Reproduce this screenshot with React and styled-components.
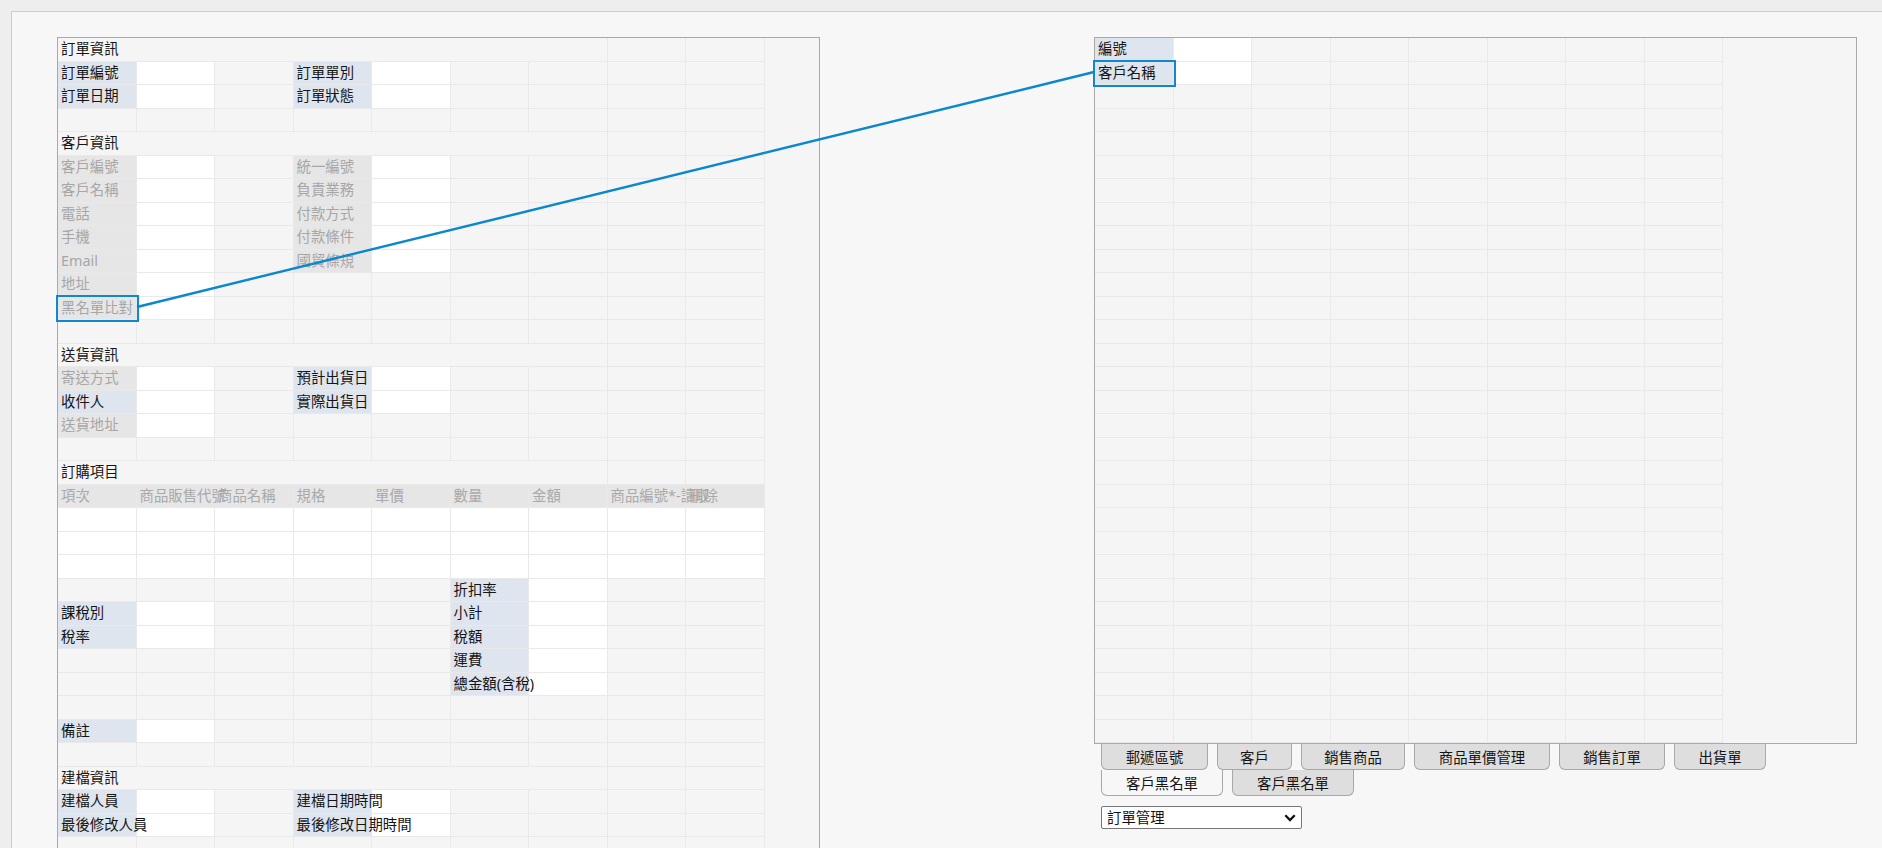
import React from 'react';
import styled, { createGlobalStyle } from 'styled-components';

const GlobalStyle = createGlobalStyle`
  html, body {
    margin: 0;
    padding: 0;
    background: #eeeeee;
    overflow: hidden;
  }
  body {
    font-family: "Noto Sans", "Noto Sans CJK TC", sans-serif;
    font-size: 14.4px;
    color: #151515;
  }
`;

// cell kinds: L label, D disabled label, I input, H grid head, S section title, E / null empty
const L = (t, linked) => ({ k: 'L', t, linked });
const D = (t, linked) => ({ k: 'D', t, linked });
const H = (t) => ({ k: 'H', t });
const I = { k: 'I' };
const E = null;

const section = (t) => ({ section: t });
const blank = [];

const orderRows = [
  section('訂單資訊'),
  [L('訂單編號'), I, E, L('訂單單別'), I],
  [L('訂單日期'), I, E, L('訂單狀態'), I],
  blank,
  section('客戶資訊'),
  [D('客戶編號'), I, E, D('統一編號'), I],
  [D('客戶名稱'), I, E, D('負責業務'), I],
  [D('電話'), I, E, D('付款方式'), I],
  [D('手機'), I, E, D('付款條件'), I],
  [D('Email'), I, E, D('國貿條規'), I],
  [D('地址'), I],
  [D('黑名單比對', true), I],
  blank,
  section('送貨資訊'),
  [D('寄送方式'), I, E, L('預計出貨日'), I],
  [L('收件人'), I, E, L('實際出貨日'), I],
  [D('送貨地址'), I],
  blank,
  section('訂購項目'),
  [H('項次'), H('商品販售代號'), H('商品名稱'), H('規格'), H('單價'), H('數量'), H('金額'), H('商品編號*-讀取'), H('刪除')],
  [I, I, I, I, I, I, I, I, I],
  [I, I, I, I, I, I, I, I, I],
  [I, I, I, I, I, I, I, I, I],
  [E, E, E, E, E, L('折扣率'), I],
  [L('課稅別'), I, E, E, E, L('小計'), I],
  [L('稅率'), I, E, E, E, L('稅額'), I],
  [E, E, E, E, E, L('運費'), I],
  [E, E, E, E, E, L('總金額(含稅)'), I],
  blank,
  [L('備註'), I],
  blank,
  section('建檔資訊'),
  [L('建檔人員'), I, E, L('建檔日期時間'), I],
  [L('最後修改人員'), I, E, L('最後修改日期時間'), I],
  blank,
  blank,
];

const customerRows = [
  [L('編號'), I],
  [L('客戶名稱', true), I],
  ...Array.from({ length: 28 }, () => blank),
];

const tabs = [
  { label: '郵遞區號', w: 107 },
  { label: '客戶', w: 75 },
  { label: '銷售商品', w: 104 },
  { label: '商品單價管理', w: 136 },
  { label: '銷售訂單', w: 106 },
  { label: '出貨單', w: 92 },
  { label: '客戶黑名單', w: 122, active: true },
  { label: '客戶黑名單', w: 122 },
];

const cellBg = {
  L: '#dfe5ee',
  D: '#e6e6e6',
  H: '#e6e6e6',
  I: '#ffffff',
  E: '#f5f5f5',
  S: '#f5f5f5',
};

const cellColor = {
  L: '#151515',
  D: '#a6a6a6',
  H: '#a9a9a9',
  S: '#151515',
};

const Sheet = ({ rows, cols }) => (
  <Grid>
    <colgroup>
      {Array.from({ length: cols }, (_, i) => <col key={i} />)}
    </colgroup>
    <tbody>
      {rows.map((row, r) => {
        if (row.section) {
          return (
            <Row key={r}>
              <Cell colSpan={7} $kind="S">{row.section}</Cell>
              <Cell $kind="E" />
              <Cell $kind="E" />
            </Row>
          );
        }
        return (
          <Row key={r}>
            {Array.from({ length: cols }, (_, c) => {
              const cell = row[c];
              if (!cell) return <Cell key={c} $kind="E" />;
              return (
                <Cell key={c} $kind={cell.k} $linked={cell.linked}>
                  {cell.t}
                </Cell>
              );
            })}
          </Row>
        );
      })}
    </tbody>
  </Grid>
);

const App = () => {
  return (
    <>
      <GlobalStyle />
      <Frame>
        <Workspace>
          <Panel $h={900}>
            <Sheet rows={orderRows} cols={9} />
          </Panel>
          <SideColumn>
            <Panel $h={707}>
              <Sheet rows={customerRows} cols={8} />
            </Panel>
            <TabBar>
              {tabs.map((tab, i) => (
                <Tab key={i} $w={tab.w} $active={tab.active}>{tab.label}</Tab>
              ))}
            </TabBar>
            <SelectWrap>
              <Select defaultValue="order">
                <option value="order">訂單管理</option>
              </Select>
              <Chevron width="12" height="8" viewBox="0 0 12 8">
                <path d="M1.3 1.3 L6 6 L10.7 1.3" fill="none" stroke="#111" strokeWidth="2.3" />
              </Chevron>
            </SelectWrap>
          </SideColumn>
          <LinkLine width="1870" height="836">
            <line x1="125" y1="295" x2="1082" y2="60" stroke="#0a87cd" strokeWidth="2.4" />
          </LinkLine>
        </Workspace>
      </Frame>
    </>
  );
};

export default App;

const Frame = styled.div`
  margin: 11px 0 0 11px;
  height: 837px;
  border-top: 1px solid #cdcdcd;
  border-left: 1px solid #cdcdcd;
  background: #f7f7f7;
  overflow: hidden;
`;

const Workspace = styled.div`
  position: relative;
  display: flex;
  align-items: flex-start;
  gap: 274px;
  padding: 25px 0 0 45px;
`;

const SideColumn = styled.div`
  display: flex;
  flex-direction: column;
  width: 763px;
`;

const Panel = styled.div`
  width: 763px;
  height: ${(p) => p.$h}px;
  box-sizing: border-box;
  border: 1px solid #a9a9a9;
  background: #f5f5f5;
  flex-shrink: 0;
`;

const Grid = styled.table`
  border-collapse: separate;
  border-spacing: 0;
  table-layout: fixed;
  width: ${(p) => p.children ? 'auto' : 'auto'};

  col {
    width: 78.5px;
  }
`;

const Row = styled.tr`
  height: 23.5px;
`;

const Cell = styled.td`
  box-sizing: border-box;
  width: 78.5px;
  max-width: 78.5px;
  height: 23.5px;
  padding: 0 3px;
  border-right: 1px solid #e9e9e9;
  border-bottom: 1px solid #e9e9e9;
  background: ${(p) => cellBg[p.$kind]};
  color: ${(p) => cellColor[p.$kind] || '#151515'};
  font-size: 14.4px;
  line-height: 1;
  white-space: nowrap;
  overflow: visible;
  vertical-align: middle;
  outline: ${(p) => (p.$linked ? '2px solid #0f88cf' : 'none')};
`;

const TabBar = styled.div`
  display: flex;
  flex-wrap: wrap;
  column-gap: 9px;
  padding: 0 7px;
`;

const Tab = styled.div`
  width: ${(p) => p.$w}px;
  height: 26px;
  box-sizing: border-box;
  display: flex;
  align-items: center;
  justify-content: center;
  border: 1px solid #a8a8a8;
  border-top: none;
  border-radius: 0 0 6px 6px;
  background: ${(p) => (p.$active ? '#f7f7f7' : '#dedede')};
  color: #151515;
  font-size: 14.4px;
  white-space: nowrap;
`;

const SelectWrap = styled.div`
  position: relative;
  width: 201px;
  height: 23px;
  margin: 10px 0 0 7px;
`;

const Select = styled.select`
  appearance: none;
  width: 100%;
  height: 100%;
  box-sizing: border-box;
  margin: 0;
  padding: 0 0 0 5px;
  border: 1px solid #767676;
  border-radius: 2px;
  background: #ffffff;
  color: #111;
  font-family: "Noto Sans", "Noto Sans CJK TC", sans-serif;
  font-size: 14.4px;
`;

const Chevron = styled.svg`
  position: absolute;
  right: 6px;
  top: 8px;
  pointer-events: none;
`;

const LinkLine = styled.svg`
  position: absolute;
  left: 0;
  top: 0;
  pointer-events: none;
`;
